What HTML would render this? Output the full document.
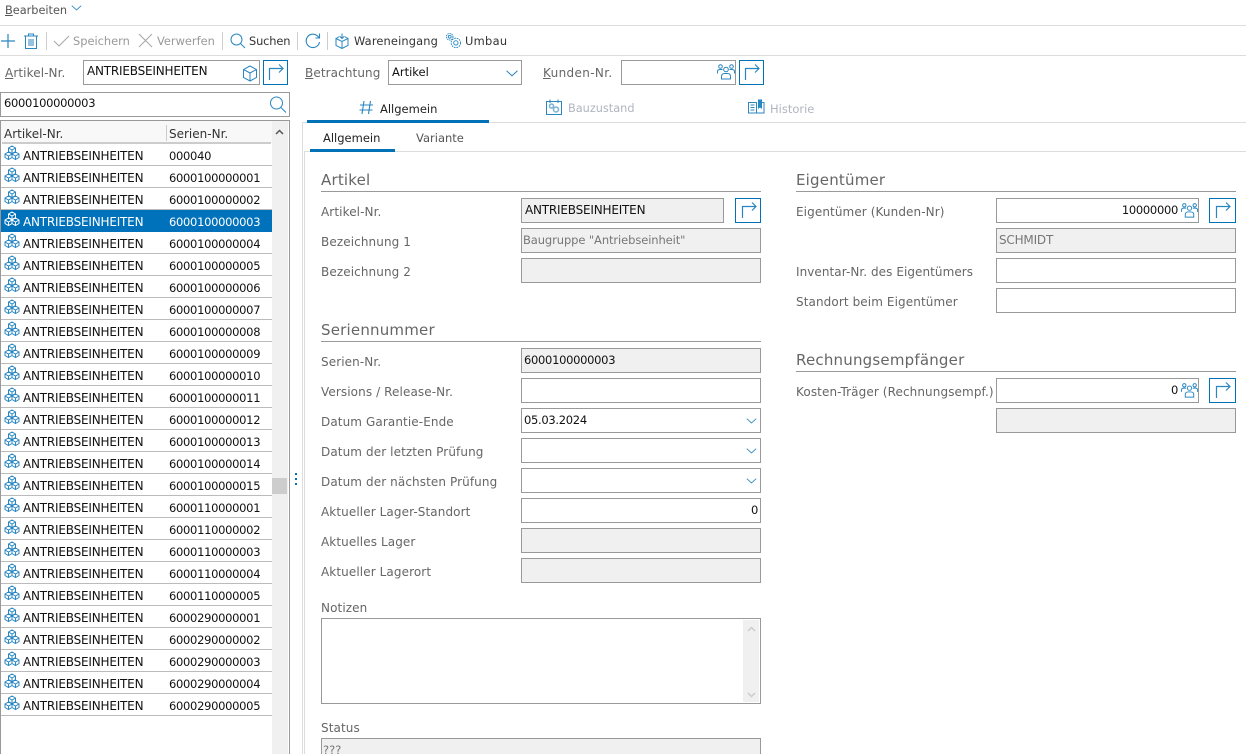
<!DOCTYPE html>
<html lang="de"><head><meta charset="utf-8"><title>Artikel</title>
<style>
html,body{margin:0;padding:0;background:#fff}
#p{position:relative;width:1246px;height:754px;overflow:hidden;background:#fff;font-family:"DejaVu Sans","Liberation Sans",sans-serif;font-size:11.5px;color:#111}
#p div,#p svg{position:absolute;box-sizing:border-box}
.t{white-space:nowrap;line-height:16px;height:16px}
.tb{font-size:11.4px;color:#333}
.dis{color:#999}
.l{white-space:nowrap;line-height:18px;height:18px;font-size:12px;letter-spacing:.1px;color:#666}
.top{color:#555}
u{text-decoration:underline}
.h{white-space:nowrap;font-size:15px;letter-spacing:.2px;color:#666;line-height:22px;height:22px}
.ln{height:1px;background:#999}
.g{background:#ddd}
.i{border:1px solid #999;background:#fff;height:25px;line-height:23px;padding:0 2px;white-space:nowrap;color:#111;letter-spacing:-.3px}
.cap{font-size:12px;letter-spacing:-.2px}
.d{background:#f0f0f0}
.gt{color:#777}
.r{text-align:right}
.b{border:1px solid #0072b5;background:#fff;height:25px}
.sep{width:1px;height:18px;top:32px;background:#ccc}
#list .row{position:relative;height:22px;width:271px;border-bottom:1px solid #bbb;line-height:25px;white-space:nowrap}
#list .row svg{left:3px;top:1px;color:#2a86c0}
#list .row b{font-weight:normal;position:absolute;left:22px;top:0;font-size:12px;letter-spacing:-.2px}
#list .row i{font-style:normal;position:absolute;left:168px;top:0;letter-spacing:-.3px}
#list .sel{background:#0072bc;color:#fff;border-bottom-color:#0072bc}
#list .sel svg{color:#fff}
</style></head><body>
<div id="p">
<svg width="0" height="0" style="left:0;top:0">
<defs>
<symbol id="cubes" viewBox="0 0 16 16"><g fill="none" stroke="currentColor" stroke-width="1"><path d="M8 1 11.500 3 11.500 6.500 8 8.500 4.500 6.500 4.500 3ZM4.500 3 8 5 11.500 3M8 5V8.500"/><path d="M4.500 7 8 9V12.500L4.500 14.500 1 12.500V9ZM1 9 4.500 11 8 9M4.500 11V14.500"/><path d="M11.500 7 15 9V12.500L11.500 14.500 8 12.500V9ZM8 9 11.500 11 15 9M11.500 11V14.500"/></g></symbol>
<symbol id="arrow" viewBox="0 0 25 25"><path d="M6.500 20V8.500H20M16 4.500 20 8.500 16 12.500" fill="none" stroke="#2a86c0" stroke-width="1.200"/></symbol>
<symbol id="people" viewBox="0 0 18 18"><g fill="none" stroke="#2a86c0" stroke-width="1"><circle cx="9" cy="6.500" r="2.300"/><path d="M4.500 16V13.500Q4.500 10.500 7.500 10.500H10.500Q13.500 10.500 13.500 13.500V16Z"/><circle cx="3.500" cy="3.500" r="1.800"/><circle cx="14.500" cy="3.500" r="1.800"/><path d="M.5 10.500V8.500Q.5 6.500 3 6.500H5.500M17.500 10.500V8.500Q17.500 6.500 15 6.500H12.500"/></g></symbol>
<symbol id="chev" viewBox="0 0 12 7"><path d="M.5 .8 6 5.800 11.500 .8" fill="none" stroke="#2a86c0" stroke-width="1"/></symbol>
<symbol id="gear" viewBox="0 0 18 18"><g fill="none" stroke="#2a86c0" stroke-width="1"><circle cx="5" cy="5" r="3.500" stroke-dasharray="1.500 .8"/><circle cx="5" cy="5" r="1.500"/><circle cx="11.500" cy="11.500" r="5" stroke-dasharray="1.800 .9"/><circle cx="11.500" cy="11.500" r="2.300"/></g></symbol>
</defs></svg>

<!-- menu -->
<div class="t top" style="left:5px;top:3px;font-size:11.300px"><u>B</u>earbeiten</div>
<svg width="11" height="6" style="left:71px;top:5px"><use href="#chev"/></svg>
<div class="g" style="left:0;top:25px;width:1246px;height:1px"></div>

<!-- toolbar -->
<svg width="16" height="16" style="left:0;top:33px"><path d="M8 1V15M1 8H15" stroke="#2a86c0" stroke-width="1.200"/></svg>
<svg width="16" height="18" style="left:23px;top:32px"><path d="M1 4H15M5.500 4V2H10.500V4M2.500 4V16.500H13.500V4M6 7V14M8 7V14M10 7V14" fill="none" stroke="#2a86c0" stroke-width="1"/></svg>
<div class="sep" style="left:46px"></div>
<svg width="17" height="14" style="left:53px;top:34px"><path d="M1 7 6 12 16 2" fill="none" stroke="#aaa" stroke-width="1.100"/></svg>
<div class="t tb dis" style="left:73px;top:33px">Speichern</div>
<svg width="15" height="15" style="left:138px;top:33px"><path d="M1 1 14 14M14 1 1 14" stroke="#aaa" stroke-width="1.100"/></svg>
<div class="t tb dis" style="left:157px;top:33px">Verwerfen</div>
<div class="sep" style="left:222px"></div>
<svg width="16" height="16" style="left:230px;top:33px"><circle cx="6.500" cy="6.500" r="5.500" fill="none" stroke="#2a86c0"/><path d="M10.500 10.500 15 15" stroke="#2a86c0"/></svg>
<div class="t tb" style="left:249px;top:33px;letter-spacing:-.15px">Suchen</div>
<div class="sep" style="left:297px"></div>
<svg width="16" height="16" style="left:305px;top:33px"><path d="M14.500 9A6.700 6.700 0 1 1 12.500 3L14.500 5M14.500 .5V5H10.500" fill="none" stroke="#2a86c0" stroke-width="1.100"/></svg>
<div class="sep" style="left:327px"></div>
<svg width="14" height="16" style="left:335px;top:33px"><path d="M1 5.500 7 8.500 13 5.500V12.500L7 15.500 1 12.500ZM7 8.500V15.500M4.500 3.500 1 5.500M9.500 3.500 13 5.500M7 .5V5.500M5 3.500 7 5.500 9 3.500" fill="none" stroke="#2a86c0"/></svg>
<div class="t tb" style="left:354px;top:33px;letter-spacing:.15px">Wareneingang</div>
<svg width="17" height="17" style="left:445px;top:32px"><use href="#gear"/></svg>
<div class="t tb" style="left:465px;top:33px;letter-spacing:.3px">Umbau</div>
<div class="g" style="left:0;top:55px;width:1246px;height:1px"></div>

<!-- top filter row -->
<div class="l" style="left:5px;top:64px"><u>A</u>rtikel-Nr.</div>
<div class="i cap" style="left:83px;top:60px;width:177px;padding-left:3px;line-height:21px">ANTRIEBSEINHEITEN</div>
<svg width="16" height="17" style="left:242px;top:65px"><path d="M8 1 14.500 4.500V12.500L8 16 1.500 12.500V4.500ZM1.500 4.500 8 8 14.500 4.500M8 8V16" fill="none" stroke="#2a86c0"/></svg>
<div class="b" style="left:263px;top:60px;width:25px"><svg width="25" height="25" style="left:-1px;top:-1px"><use href="#arrow"/></svg></div>

<div class="l" style="left:305px;top:64px"><u>B</u>etrachtung</div>
<div class="i" style="left:388px;top:60px;width:134px;padding-left:3px;letter-spacing:0">Artikel</div>
<svg width="12" height="7" style="left:506px;top:70px"><use href="#chev"/></svg>
<div class="l" style="left:543px;top:64px;letter-spacing:.35px"><u>K</u>unden-Nr.</div>
<div class="i" style="left:621px;top:60px;width:115px"></div>
<svg width="18" height="18" style="left:717px;top:63px"><use href="#people"/></svg>
<div class="b" style="left:739px;top:60px;width:25px"><svg width="25" height="25" style="left:-1px;top:-1px"><use href="#arrow"/></svg></div>

<!-- search -->
<div class="i" style="left:0;top:92px;width:290px;padding-left:3px;line-height:21px">6000100000003</div>
<svg width="18" height="18" style="left:269px;top:96px"><circle cx="7.500" cy="7" r="6" fill="none" stroke="#2a86c0"/><path d="M12 11.500 17 16.500" stroke="#2a86c0"/></svg>

<!-- list -->
<div style="left:0;top:120px;width:290px;height:640px;border:1px solid #999"></div>
<div style="left:1px;top:121px;width:271px;height:22px;background:#f8f8f8"></div>
<div class="t" style="left:4px;top:126px;color:#333;font-size:12px">Artikel-Nr.</div>
<div class="t" style="left:169px;top:126px;color:#333;font-size:12px">Serien-Nr.</div>
<div style="left:166px;top:125px;width:1px;height:16px;background:#ccc"></div>
<div style="left:2px;top:142px;width:269px;height:2px;background:#ccc"></div>
<div style="left:272px;top:121px;width:16px;height:633px;background:#f0f0f0"></div>
<svg width="9" height="6" style="left:275px;top:129px"><path d="M1 5 4.500 1.500 8 5" fill="none" stroke="#555" stroke-width="1.500"/></svg>
<div style="left:272px;top:478px;width:15px;height:16px;background:#cdcdcd"></div>

<div id="list" style="left:1px;top:144px;width:271px;height:572px">
<div class="row"><svg width="16" height="16"><use href="#cubes"/></svg><b>ANTRIEBSEINHEITEN</b><i>000040</i></div>
<div class="row"><svg width="16" height="16"><use href="#cubes"/></svg><b>ANTRIEBSEINHEITEN</b><i>6000100000001</i></div>
<div class="row"><svg width="16" height="16"><use href="#cubes"/></svg><b>ANTRIEBSEINHEITEN</b><i>6000100000002</i></div>
<div class="row sel"><svg width="16" height="16"><use href="#cubes"/></svg><b>ANTRIEBSEINHEITEN</b><i>6000100000003</i></div>
<div class="row"><svg width="16" height="16"><use href="#cubes"/></svg><b>ANTRIEBSEINHEITEN</b><i>6000100000004</i></div>
<div class="row"><svg width="16" height="16"><use href="#cubes"/></svg><b>ANTRIEBSEINHEITEN</b><i>6000100000005</i></div>
<div class="row"><svg width="16" height="16"><use href="#cubes"/></svg><b>ANTRIEBSEINHEITEN</b><i>6000100000006</i></div>
<div class="row"><svg width="16" height="16"><use href="#cubes"/></svg><b>ANTRIEBSEINHEITEN</b><i>6000100000007</i></div>
<div class="row"><svg width="16" height="16"><use href="#cubes"/></svg><b>ANTRIEBSEINHEITEN</b><i>6000100000008</i></div>
<div class="row"><svg width="16" height="16"><use href="#cubes"/></svg><b>ANTRIEBSEINHEITEN</b><i>6000100000009</i></div>
<div class="row"><svg width="16" height="16"><use href="#cubes"/></svg><b>ANTRIEBSEINHEITEN</b><i>6000100000010</i></div>
<div class="row"><svg width="16" height="16"><use href="#cubes"/></svg><b>ANTRIEBSEINHEITEN</b><i>6000100000011</i></div>
<div class="row"><svg width="16" height="16"><use href="#cubes"/></svg><b>ANTRIEBSEINHEITEN</b><i>6000100000012</i></div>
<div class="row"><svg width="16" height="16"><use href="#cubes"/></svg><b>ANTRIEBSEINHEITEN</b><i>6000100000013</i></div>
<div class="row"><svg width="16" height="16"><use href="#cubes"/></svg><b>ANTRIEBSEINHEITEN</b><i>6000100000014</i></div>
<div class="row"><svg width="16" height="16"><use href="#cubes"/></svg><b>ANTRIEBSEINHEITEN</b><i>6000100000015</i></div>
<div class="row"><svg width="16" height="16"><use href="#cubes"/></svg><b>ANTRIEBSEINHEITEN</b><i>6000110000001</i></div>
<div class="row"><svg width="16" height="16"><use href="#cubes"/></svg><b>ANTRIEBSEINHEITEN</b><i>6000110000002</i></div>
<div class="row"><svg width="16" height="16"><use href="#cubes"/></svg><b>ANTRIEBSEINHEITEN</b><i>6000110000003</i></div>
<div class="row"><svg width="16" height="16"><use href="#cubes"/></svg><b>ANTRIEBSEINHEITEN</b><i>6000110000004</i></div>
<div class="row"><svg width="16" height="16"><use href="#cubes"/></svg><b>ANTRIEBSEINHEITEN</b><i>6000110000005</i></div>
<div class="row"><svg width="16" height="16"><use href="#cubes"/></svg><b>ANTRIEBSEINHEITEN</b><i>6000290000001</i></div>
<div class="row"><svg width="16" height="16"><use href="#cubes"/></svg><b>ANTRIEBSEINHEITEN</b><i>6000290000002</i></div>
<div class="row"><svg width="16" height="16"><use href="#cubes"/></svg><b>ANTRIEBSEINHEITEN</b><i>6000290000003</i></div>
<div class="row"><svg width="16" height="16"><use href="#cubes"/></svg><b>ANTRIEBSEINHEITEN</b><i>6000290000004</i></div>
<div class="row"><svg width="16" height="16"><use href="#cubes"/></svg><b>ANTRIEBSEINHEITEN</b><i>6000290000005</i></div>
</div>

<!-- splitter -->
<div style="left:295px;top:473px;width:2px;height:2px;background:#0072b5"></div>
<div style="left:295px;top:478px;width:2px;height:2px;background:#0072b5"></div>
<div style="left:295px;top:483px;width:2px;height:2px;background:#0072b5"></div>

<!-- tabs -->
<div class="g" style="left:302px;top:122px;width:944px;height:1px"></div>
<div class="g" style="left:302px;top:122px;width:1px;height:632px"></div>
<div class="g" style="left:304px;top:151px;width:1px;height:603px"></div>
<div style="left:307px;top:120px;width:182px;height:3px;background:#0072b5"></div>
<svg width="15" height="15" style="left:359px;top:100px"><path d="M5 1 3 14M11.500 1 9.500 14M1 5H14M.5 10H13.500" stroke="#2a86c0" stroke-width="1.100" fill="none"/></svg>
<div class="t" style="left:380px;top:101px;font-size:11.500px;color:#222">Allgemein</div>
<svg width="16" height="16" style="left:546px;top:99px"><path d="M.5 2.500H15.500V15.500H.5Z" fill="none" stroke="#2a86c0"/><path d="M4 .5V4M12 .5V4" stroke="#2a86c0"/><circle cx="5.500" cy="7" r="2" fill="none" stroke="#7ab3d6" stroke-width="1.500"/><circle cx="10" cy="10.500" r="2.500" fill="none" stroke="#7ab3d6" stroke-width="1.500"/></svg>
<div class="t" style="left:568px;top:101px;font-size:11.300px;color:#b0b5c0">Bauzustand</div>
<svg width="17" height="16" style="left:748px;top:99px"><path d="M8.500 3V14.500M8.500 3.500H.5V14H16V3.500H14" fill="none" stroke="#2a86c0"/><path d="M2.500 6H6.500M2.500 8.500H6.500M2.500 11H6.500" stroke="#2a86c0"/><path d="M10 .5H14V10L12 8.500 10 10Z" fill="#2a86c0"/></svg>
<div class="t" style="left:770px;top:101px;font-size:11.500px;color:#b0b5c0">Historie</div>

<div class="g" style="left:304px;top:151px;width:942px;height:1px"></div>
<div style="left:310px;top:149px;width:85px;height:3px;background:#0072b5"></div>
<div class="t" style="left:323px;top:130px;font-size:11.500px;color:#222">Allgemein</div>
<div class="t" style="left:416px;top:130px;font-size:11.500px;color:#555">Variante</div>

<!-- Left form -->
<div class="h" style="left:321px;top:169px">Artikel</div>
<div class="ln" style="left:321px;top:191px;width:440px"></div>
<div class="l" style="left:321px;top:203px">Artikel-Nr.</div>
<div class="i d cap" style="left:521px;top:198px;width:203px;padding-left:3px;line-height:22px">ANTRIEBSEINHEITEN</div>
<div class="b" style="left:735px;top:198px;width:26px"><svg width="25" height="25" style="left:0;top:-1px"><use href="#arrow"/></svg></div>
<div class="l" style="left:321px;top:233px">Bezeichnung 1</div>
<div class="i d gt" style="left:521px;top:228px;width:240px;letter-spacing:-.1px;padding-left:1px">Baugruppe "Antriebseinheit"</div>
<div class="l" style="left:321px;top:263px">Bezeichnung 2</div>
<div class="i d" style="left:521px;top:258px;width:240px"></div>

<div class="h" style="left:321px;top:319px">Seriennummer</div>
<div class="ln" style="left:321px;top:341px;width:440px"></div>
<div class="l" style="left:321px;top:353px">Serien-Nr.</div>
<div class="i d" style="left:521px;top:348px;width:240px">6000100000003</div>
<div class="l" style="left:321px;top:383px">Versions / Release-Nr.</div>
<div class="i" style="left:521px;top:378px;width:240px"></div>
<div class="l" style="left:321px;top:413px">Datum Garantie-Ende</div>
<div class="i" style="left:521px;top:408px;width:240px">05.03.2024</div>
<svg width="11" height="6" style="left:746px;top:418px"><use href="#chev"/></svg>
<div class="l" style="left:321px;top:443px">Datum der letzten Prüfung</div>
<div class="i" style="left:521px;top:438px;width:240px"></div>
<svg width="11" height="6" style="left:746px;top:448px"><use href="#chev"/></svg>
<div class="l" style="left:321px;top:473px">Datum der nächsten Prüfung</div>
<div class="i" style="left:521px;top:468px;width:240px"></div>
<svg width="11" height="6" style="left:746px;top:478px"><use href="#chev"/></svg>
<div class="l" style="left:321px;top:503px">Aktueller Lager-Standort</div>
<div class="i r" style="left:521px;top:498px;width:240px">0</div>
<div class="l" style="left:321px;top:533px">Aktuelles Lager</div>
<div class="i d" style="left:521px;top:528px;width:240px"></div>
<div class="l" style="left:321px;top:563px">Aktueller Lagerort</div>
<div class="i d" style="left:521px;top:558px;width:240px"></div>

<div class="l" style="left:321px;top:599px">Notizen</div>
<div class="i" style="left:321px;top:618px;width:440px;height:86px"></div>
<div style="left:743px;top:620px;width:16px;height:82px;background:#f0f0f0"></div>
<svg width="9" height="6" style="left:747px;top:626px"><path d="M1 5 4.500 1.500 8 5" fill="none" stroke="#ccc" stroke-width="1.500"/></svg>
<svg width="9" height="6" style="left:747px;top:692px"><path d="M1 1 4.500 4.500 8 1" fill="none" stroke="#ccc" stroke-width="1.500"/></svg>

<div class="l" style="left:321px;top:719px">Status</div>
<div class="i d gt" style="left:321px;top:738px;width:440px;height:30px;padding-left:1px;letter-spacing:0">???</div>

<!-- Right form -->
<div class="h" style="left:796px;top:169px">Eigentümer</div>
<div class="ln" style="left:796px;top:191px;width:440px"></div>
<div class="l" style="left:796px;top:203px">Eigentümer (Kunden-Nr)</div>
<div class="i r" style="left:996px;top:198px;width:203px;padding-right:20px;line-height:22px">10000000</div>
<svg width="17" height="17" style="left:1181px;top:202px"><use href="#people"/></svg>
<div class="b" style="left:1209px;top:198px;width:27px"><svg width="25" height="25" style="left:0;top:-1px"><use href="#arrow"/></svg></div>
<div class="i d gt cap" style="left:996px;top:228px;width:240px">SCHMIDT</div>
<div class="l" style="left:796px;top:263px;letter-spacing:.06px">Inventar-Nr. des Eigentümers</div>
<div class="i" style="left:996px;top:258px;width:240px"></div>
<div class="l" style="left:796px;top:293px">Standort beim Eigentümer</div>
<div class="i" style="left:996px;top:288px;width:240px"></div>

<div class="h" style="left:796px;top:349px">Rechnungsempfänger</div>
<div class="ln" style="left:796px;top:371px;width:440px"></div>
<div class="l" style="left:796px;top:383px;letter-spacing:.1px">Kosten-Träger (Rechnungsempf.)</div>
<div class="i r" style="left:996px;top:378px;width:203px;padding-right:20px;line-height:22px">0</div>
<svg width="17" height="17" style="left:1181px;top:382px"><use href="#people"/></svg>
<div class="b" style="left:1209px;top:378px;width:27px"><svg width="25" height="25" style="left:0;top:-1px"><use href="#arrow"/></svg></div>
<div class="i d" style="left:996px;top:408px;width:240px"></div>
</div>
</body></html>
